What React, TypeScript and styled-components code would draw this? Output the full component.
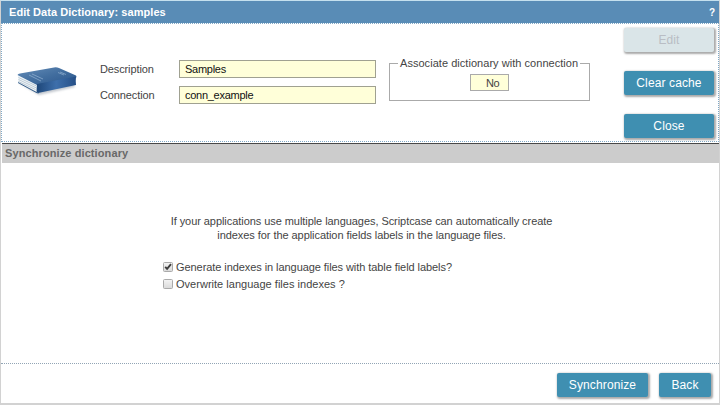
import React from "react";
import styled, { createGlobalStyle } from "styled-components";

const GlobalStyle = createGlobalStyle`
  * { box-sizing: border-box; }
  body {
    margin: 0;
    background: #fff;
    color: #444;
    font: 11px/14px "Liberation Sans", Arial, sans-serif;
    overflow: hidden;
  }
`;

const Page = styled.div`
  width: 720px;
  height: 405px;
  display: flex;
  flex-direction: column;
  border: 1px solid #d2d2d2;
  border-top-color: #c5e0ee;
  border-bottom-width: 2px;
`;

const TitleBar = styled.header`
  height: 22px;
  flex: none;
  display: flex;
  justify-content: space-between;
  padding: 4px 4px 0 8px;
  background: #598cb6;
  color: #fff;
  font-weight: bold;
  line-height: 14px;
`;

const Title = styled.span`
  letter-spacing: 0.05px;
`;

const Help = styled.span`
  font-size: 10px;
  line-height: 15px;
`;

const Details = styled.section`
  height: 119px;
  flex: none;
  display: flex;
  margin-bottom: 1px;
  border: 1px dotted #7fa8c6;
`;

const BookSlot = styled.div`
  width: 97px;
  padding: 38px 0 0 13px;
`;

const Fields = styled.div`
  width: 290px;
  display: grid;
  grid-template-columns: 80px 197px;
  grid-auto-rows: 18px;
  row-gap: 8px;
  padding-top: 36px;
`;

const Label = styled.label`
  line-height: 18px;
  padding-left: 1px;
  letter-spacing: -0.12px;
`;

const ReadOnlyValue = styled.div`
  height: 18px;
  padding-left: 5px;
  border: 1px solid #a0a191;
  background: #ffffd9;
  color: #111;
  line-height: 16px;
  letter-spacing: -0.27px;
`;

const Association = styled.fieldset`
  width: 201px;
  flex: none;
  height: 45px;
  margin: 32px 0 0;
  padding: 4px 0 0;
  border: 1px solid #aaa;
  display: flex;
  justify-content: center;
`;

const Legend = styled.legend`
  margin-left: 8px;
  padding: 0 2px;
  letter-spacing: 0.04px;
  line-height: 14px;
  white-space: nowrap;
`;

const Answer = styled.div`
  width: 39px;
  height: 17px;
  border: 1px solid #aaa;
  background: #ffffd9;
  line-height: 16px;
  padding-left: 15px;
  letter-spacing: -0.4px;
`;

const Actions = styled.div`
  display: flex;
  flex-direction: column;
  gap: 19px;
  padding: 4px 0 0 34px;
`;

const Button = styled.button<{ $width: number }>`
  width: ${(p) => p.$width}px;
  height: 24px;
  flex: none;
  padding: 0;
  border: 0;
  border-radius: 2px;
  background: #3f8fb1;
  box-shadow: 1px 1px 2px 1px #aaa;
  color: #fff;
  font: 12px/24px "Liberation Sans", Arial, sans-serif;
  letter-spacing: 0.12px;
  &:disabled {
    background: #dae5e8;
    color: #b9bdc4;
  }
`;

const SectionTitle = styled.h2`
  height: 20px;
  flex: none;
  margin: 0 0 0 1px;
  padding-left: 3px;
  border-top: 1px solid #484848;
  background: #ccc;
  color: #686868;
  font-size: 11px;
  line-height: 19px;
  letter-spacing: 0.1px;
`;

const Content = styled.main`
  height: 201px;
  flex: none;
  padding-top: 51px;
  border-bottom: 1px dotted #92a5b5;
`;

const Intro = styled.p`
  margin: 0 0 16px;
  padding-left: 3px;
  text-align: center;
  letter-spacing: -0.06px;
  white-space: nowrap;
`;

const Option = styled.label<{ $tracking: number }>`
  display: flex;
  align-items: center;
  gap: 3px;
  height: 17px;
  padding-left: 162px;
  letter-spacing: ${(p) => p.$tracking}px;
  white-space: nowrap;
`;

const Footer = styled.footer`
  display: flex;
  justify-content: flex-end;
  gap: 11px;
  padding: 9px 8px 0 0;
`;

const CheckBoxMark = ({ checked = false }: { checked?: boolean }) => (
  <svg width="10" height="10" viewBox="0 0 10 10" role="img" aria-label={checked ? "Checked" : "Unchecked"}>
    <defs>
      <linearGradient id={checked ? "boxOn" : "boxOff"} x2="0" y2="1">
        <stop stopColor="#f4f4f4" />
        <stop offset="1" stopColor="#d9d9d9" />
      </linearGradient>
    </defs>
    <rect x=".5" y=".5" width="9" height="9" rx="1" fill={`url(#${checked ? "boxOn" : "boxOff"})`} stroke="#aaa" />
    {checked && <path d="M2.2 4.8 4.1 6.8 8 2.2" fill="none" stroke="#3c3c3c" strokeWidth="1.9" />}
  </svg>
);

const Book = () => (
  <svg width="64" height="38" viewBox="0 0 64 38" role="img" aria-label="Dictionary">
    <defs>
      <linearGradient id="cover" x1="0" y1="0" x2="1" y2="1">
        <stop stopColor="#658db8" />
        <stop offset=".5" stopColor="#426e9f" />
        <stop offset="1" stopColor="#2b568d" />
      </linearGradient>
      <linearGradient id="spine">
        <stop stopColor="#1d4678" />
        <stop offset=".5" stopColor="#3e6fab" />
        <stop offset="1" stopColor="#254f87" />
      </linearGradient>
      <filter id="soft" x="-20%" y="-50%" width="140%" height="200%">
        <feGaussianBlur stdDeviation="1.2" />
      </filter>
    </defs>
    <path d="M4 21 24 33 60 25 56 18Z" fill="#9aa3ae" opacity=".6" filter="url(#soft)" />
    <path d="M3 13 22 22 22 30 3 20Z" fill="#eef4f8" />
    <path d="m3.5 15.5 18 8.5m-18-6.5 18 8.5m-18-6.5 17 8" fill="none" stroke="#9caebe" strokeWidth=".6" />
    <path d="M2.5 13Q3 12 5 11.6L39 5.5Q41.5 5 44 6L61 13.5Q62 14.5 61 16L22 23Z" fill="url(#cover)" />
    <path d="M22 22 61 14.5Q60.5 19 61 23L23 31 21.5 29.5Z" fill="url(#spine)" />
    <path d="M3 20.5 22 30.8 24 30.8" fill="none" stroke="#285585" strokeWidth=".9" />
    <path d="m14 13 12 6m-9-7 11 5M43 10.5l6 2.5m-4-3 6 2.5" fill="none" stroke="#b9d2ea" strokeWidth=".8" opacity=".6" />
  </svg>
);

export default function App() {
  return (
    <>
      <GlobalStyle />
      <Page>
        <TitleBar>
          <Title>Edit Data Dictionary: samples</Title>
          <Help>?</Help>
        </TitleBar>
        <Details>
          <BookSlot><Book /></BookSlot>
          <Fields>
            <Label>Description</Label>
            <ReadOnlyValue>Samples</ReadOnlyValue>
            <Label>Connection</Label>
            <ReadOnlyValue>conn_example</ReadOnlyValue>
          </Fields>
          <Association>
            <Legend>Associate dictionary with connection</Legend>
            <Answer>No</Answer>
          </Association>
          <Actions>
            <Button $width={90} disabled>Edit</Button>
            <Button $width={90}>Clear cache</Button>
            <Button $width={90}>Close</Button>
          </Actions>
        </Details>
        <SectionTitle>Synchronize dictionary</SectionTitle>
        <Content>
          <Intro>
            If your applications use multiple languages, Scriptcase can automatically create<br />
            indexes for the application fields labels in the language files.
          </Intro>
          <Option $tracking={-0.07}><CheckBoxMark checked />Generate indexes in language files with table field labels?</Option>
          <Option $tracking={0.02}><CheckBoxMark />Overwrite language files indexes ?</Option>
        </Content>
        <Footer>
          <Button $width={91}>Synchronize</Button>
          <Button $width={52}>Back</Button>
        </Footer>
      </Page>
    </>
  );
}
